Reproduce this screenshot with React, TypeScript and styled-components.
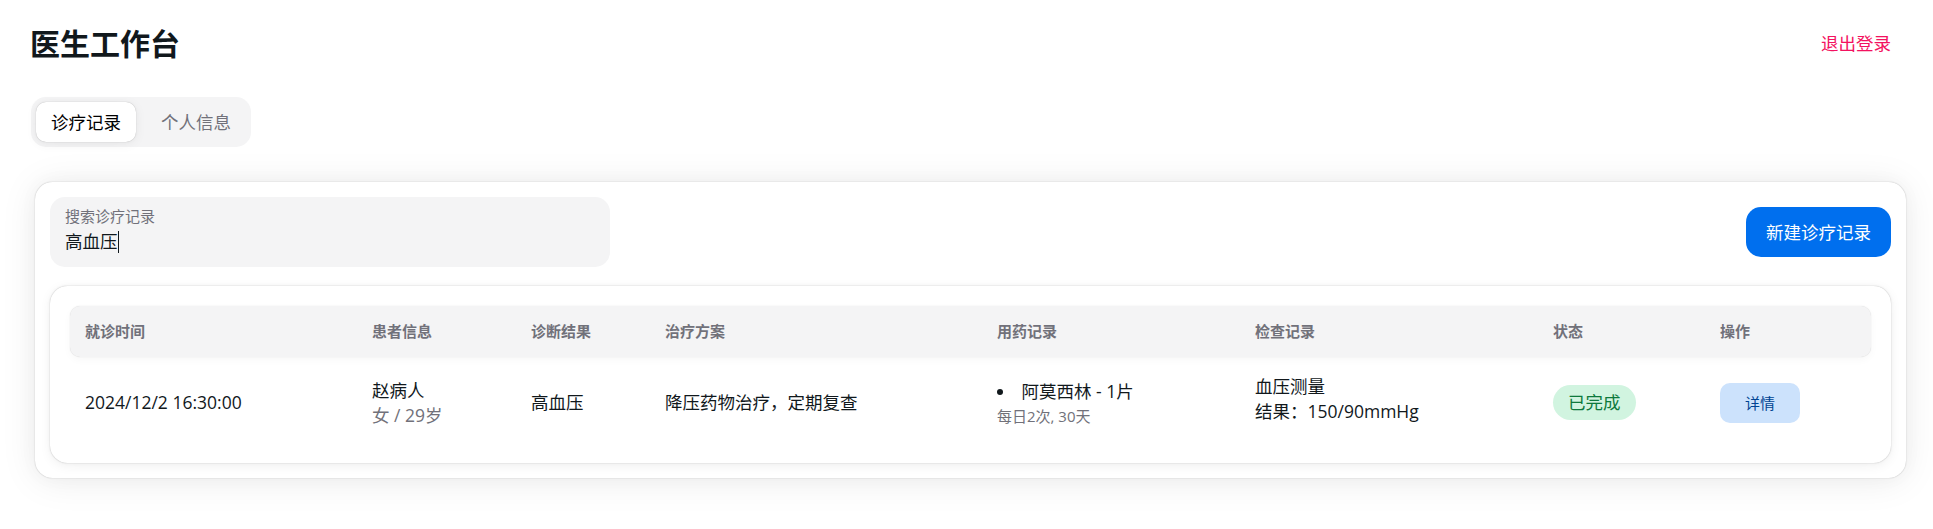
import React from "react";
import styled, { createGlobalStyle } from "styled-components";

const GlobalStyle = createGlobalStyle`
  *, *::before, *::after { box-sizing: border-box; }
  html, body { margin: 0; padding: 0; background: #ffffff; }
  body {
    font-family: "Open Sans", "Noto Sans CJK SC", sans-serif;
    color: #11181c;
  }
`;

const COLUMNS = "287px 159px 134px 332px 258px 298px 167px 166px";

const Page = styled.div`
  padding: 18px 22px 40px 30px;
`;

const TopBar = styled.header`
  display: flex;
  align-items: center;
  justify-content: space-between;
  height: 50px;
`;

const Title = styled.h1`
  margin: 0;
  font-size: 30px;
  line-height: 45px;
  font-weight: 700;
  color: #11181c;
`;

const LogoutButton = styled.button`
  height: 50px;
  padding: 0 20px;
  border: 0;
  border-radius: 15px;
  background: transparent;
  color: #f31260;
  font-family: inherit;
  font-size: 17.5px;
  line-height: 25px;
  cursor: pointer;
`;

const TabList = styled.div`
  display: inline-flex;
  gap: 10px;
  margin: 29px 0 0 1px;
  padding: 5px;
  border-radius: 15px;
  background: #f4f4f5;
`;

const Tab = styled.button<{ $active?: boolean }>`
  height: 40px;
  padding: 0 15px;
  border: 0;
  border-radius: 10px;
  font-family: inherit;
  font-size: 17.5px;
  line-height: 25px;
  cursor: pointer;
  background: ${(p) => (p.$active ? "#ffffff" : "transparent")};
  color: ${(p) => (p.$active ? "#000000" : "#71717a")};
  box-shadow: ${(p) =>
    p.$active
      ? "0 0 6px rgba(0,0,0,0.02), 0 2px 12px rgba(0,0,0,0.06), 0 0 1px rgba(0,0,0,0.3)"
      : "none"};
`;

const Card = styled.section`
  margin: 35px 5px 0 5px;
  padding: 15px;
  border-radius: 17.5px;
  background: #ffffff;
  box-shadow: 0 0 19px rgba(0, 0, 0, 0.03), 0 2.5px 37px rgba(0, 0, 0, 0.08),
    0 0 1.25px rgba(0, 0, 0, 0.3);
`;

const Toolbar = styled.div`
  display: flex;
  align-items: center;
  justify-content: space-between;
`;

const SearchField = styled.label`
  display: flex;
  flex-direction: column;
  width: 560px;
  height: 70px;
  padding: 10px 15px 0;
  border-radius: 15px;
  background: #f4f4f5;
  cursor: text;
`;

const FieldLabel = styled.span`
  font-size: 15px;
  line-height: 19px;
  color: #71717a;
`;

const FieldValue = styled.span`
  display: flex;
  align-items: center;
  margin-top: 3px;
  font-size: 17.5px;
  line-height: 25px;
  color: #11181c;
`;

const Caret = styled.span`
  display: inline-block;
  width: 1px;
  height: 22px;
  background: #11181c;
`;

const PrimaryButton = styled.button`
  height: 50px;
  padding: 0 20px;
  border: 0;
  border-radius: 15px;
  background: #006fee;
  color: #ffffff;
  font-family: inherit;
  font-size: 17.5px;
  line-height: 25px;
  cursor: pointer;
`;

const TableWrap = styled.div`
  margin-top: 19px;
  padding: 20px;
  border-radius: 17.5px;
  background: #ffffff;
  box-shadow: 0 0 6px rgba(0, 0, 0, 0.02), 0 2.5px 12px rgba(0, 0, 0, 0.06),
    0 0 1.25px rgba(0, 0, 0, 0.3);
`;

const HeaderRow = styled.div`
  display: grid;
  grid-template-columns: ${COLUMNS};
  align-items: center;
  height: 51px;
  border-radius: 10px;
  background: #f4f4f5;
  box-shadow: 0 0 1px rgba(0, 0, 0, 0.18), 0 3px 8px rgba(0, 0, 0, 0.03);
`;

const HeaderCell = styled.div`
  padding: 0 15px;
  font-size: 15px;
  line-height: 19px;
  font-weight: 700;
  color: #71717a;
`;

const BodyRow = styled.div`
  display: grid;
  grid-template-columns: ${COLUMNS};
  align-items: center;
  height: 81px;
  margin-top: 5px;
`;

const Cell = styled.div<{ $lift?: number }>`
  padding: 0 15px ${(p) => p.$lift ?? 0}px;
  font-size: 17.5px;
  line-height: 25px;
  color: #11181c;
`;

const Muted = styled.div`
  color: #71717a;
`;

const MedList = styled.ul`
  margin: 0;
  padding: 0;
  list-style: disc inside;
`;

const MedNote = styled.div`
  margin-top: 2px;
  font-size: 15px;
  line-height: 20px;
  color: #71717a;
`;

const StatusChip = styled.span`
  display: inline-flex;
  align-items: center;
  height: 35px;
  padding: 0 15px;
  border-radius: 999px;
  background: #d1f4e0;
  color: #0e793c;
  font-size: 17.5px;
  line-height: 25px;
`;

const DetailButton = styled.button`
  width: 80px;
  height: 40px;
  border: 0;
  border-radius: 10px;
  background: #cce2fc;
  color: #004493;
  font-family: inherit;
  font-size: 15px;
  line-height: 20px;
  cursor: pointer;
`;

const headers = ["就诊时间", "患者信息", "诊断结果", "治疗方案", "用药记录", "检查记录", "状态", "操作"];

export default function App() {
  return (
    <>
      <GlobalStyle />
      <Page>
        <TopBar>
          <Title>医生工作台</Title>
          <LogoutButton>退出登录</LogoutButton>
        </TopBar>
        <div>
          <TabList>
            <Tab $active>诊疗记录</Tab>
            <Tab>个人信息</Tab>
          </TabList>
        </div>
        <Card>
          <Toolbar>
            <SearchField>
              <FieldLabel>搜索诊疗记录</FieldLabel>
              <FieldValue>
                高血压
                <Caret />
              </FieldValue>
            </SearchField>
            <PrimaryButton>新建诊疗记录</PrimaryButton>
          </Toolbar>
          <TableWrap>
            <HeaderRow>
              {headers.map((h) => (
                <HeaderCell key={h}>{h}</HeaderCell>
              ))}
            </HeaderRow>
            <BodyRow>
              <Cell>2024/12/2 16:30:00</Cell>
              <Cell>
                <div>赵病人</div>
                <Muted>女 / 29岁</Muted>
              </Cell>
              <Cell>高血压</Cell>
              <Cell>降压药物治疗，定期复查</Cell>
              <Cell>
                <MedList>
                  <li>
                    阿莫西林 - 1片
                    <MedNote>每日2次, 30天</MedNote>
                  </li>
                </MedList>
              </Cell>
              <Cell $lift={8}>
                <div>血压测量</div>
                <div>结果：150/90mmHg</div>
              </Cell>
              <Cell>
                <StatusChip>已完成</StatusChip>
              </Cell>
              <Cell>
                <DetailButton>详情</DetailButton>
              </Cell>
            </BodyRow>
          </TableWrap>
        </Card>
      </Page>
    </>
  );
}
